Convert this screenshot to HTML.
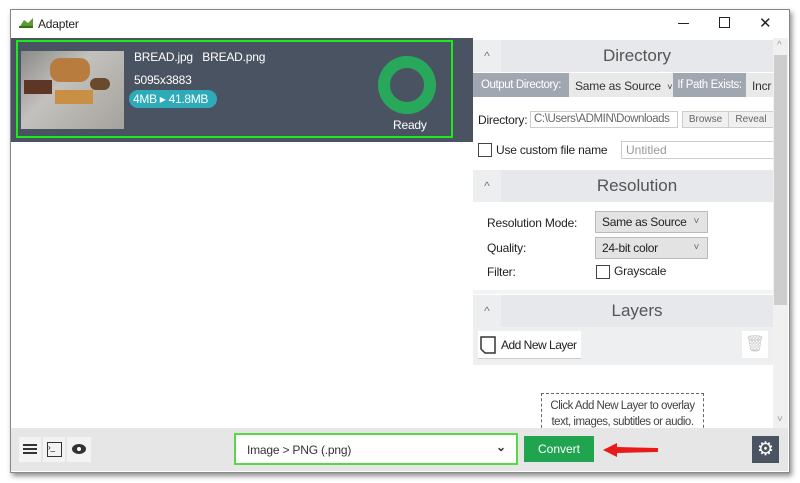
<!DOCTYPE html><html><head><style>
body{margin:0;width:800px;height:483px;background:#fff;font-family:"Liberation Sans",sans-serif;position:relative;overflow:hidden}
.a{position:absolute;white-space:nowrap}
.win{left:10px;top:9px;width:778px;height:462px;border:1px solid #888;box-shadow:2px 3px 5px rgba(0,0,0,.45);background:#fff}
.t{font-size:12px;color:#222;letter-spacing:-0.2px}
.hd{background:#e6e8eb;height:32px}
.hd .c{position:absolute;left:0;top:0;width:28px;height:32px;background:#eceef0;color:#777;text-align:center;font-size:12px;line-height:32px}
.hd .n{position:absolute;left:28px;right:0;text-align:center;font-size:17px;color:#555;line-height:32px}
.sel{background:#e3e3e3;border:1px solid #bbb;font-size:12px;color:#222;padding-left:6px;line-height:20px;height:20px;letter-spacing:-0.3px}
.sel:after{content:"˅";position:absolute;right:8px;top:0;font-size:10px;color:#666}
.cb{width:12px;height:12px;border:1px solid #444;background:#fff}
</style></head><body>
<div class="a win"></div>
<svg class="a" style="left:18px;top:16px" width="16" height="14"><path d="M1 12 L6 4 L10 7 L15 2 L15 12Z" fill="#5a9b2e"/><path d="M1 12 L15 12 L15 10 L1 10Z" fill="#3b6e1b"/></svg>
<div class="a t" style="left:38px;top:17px">Adapter</div>
<div class="a" style="left:678px;top:23px;width:11px;height:1px;background:#222"></div>
<div class="a" style="left:719px;top:17px;width:9px;height:9px;border:1px solid #222"></div>
<div class="a" style="left:759px;top:14px;font-size:15px;color:#222">✕</div>
<div class="a" style="left:11px;top:38px;width:462px;height:104px;background:#4a5361"></div>
<div class="a" style="left:16px;top:40px;width:433px;height:94px;border:2px solid #1bea1b"></div>
<div class="a" style="left:21px;top:51px;width:103px;height:78px;background:linear-gradient(135deg,#8a8a88,#c3c1bd 40%,#a5a29c)"></div>
<div class="a" style="left:50px;top:58px;width:40px;height:24px;border-radius:10px;background:#b77c3e"></div>
<div class="a" style="left:55px;top:90px;width:38px;height:14px;background:#c98f45"></div>
<div class="a" style="left:24px;top:80px;width:28px;height:14px;background:#5d3626"></div>
<div class="a" style="left:90px;top:78px;width:20px;height:12px;border-radius:6px;background:#6a4a2a"></div>
<div class="a t" style="left:134px;top:50px;color:#fff">BREAD.jpg &nbsp;&nbsp;BREAD.png</div>
<div class="a t" style="left:134px;top:73px;color:#fff">5095x3883</div>
<div class="a" style="left:129px;top:90px;width:88px;height:18px;border-radius:9px;background:#2eabb8;color:#fff;font-size:12px;line-height:18px;padding-left:4px;box-sizing:border-box;letter-spacing:-0.3px">4MB ▸ 41.8MB</div>
<div class="a" style="left:378px;top:56px;width:58px;height:58px;border-radius:50%;border:12px solid #27a85a;box-sizing:border-box"></div>
<div class="a t" style="left:393px;top:118px;color:#fff">Ready</div>
<div class="a hd" style="left:473px;top:40px;width:300px"><div class="c">^</div><div class="n">Directory</div></div>
<div class="a" style="left:473px;top:73px;width:300px;height:24px;background:#e9e9e9;overflow:hidden">
<div class="a" style="left:0;top:0;width:96px;height:24px;background:#a1a7b0;color:#fff;font-size:11.5px;line-height:24px;text-align:center;letter-spacing:-0.4px">Output Directory:</div>
<div class="a t" style="left:102px;top:6px;color:#333">Same as Source &nbsp;<span style="font-size:9px">˅</span></div>
<div class="a" style="left:200px;top:0;width:73px;height:24px;background:#a1a7b0;color:#fff;font-size:11.5px;line-height:24px;text-align:center;letter-spacing:-0.4px">If Path Exists:</div>
<div class="a t" style="left:279px;top:6px;color:#333">Incr</div></div>
<div class="a t" style="left:478px;top:113px">Directory:</div>
<div class="a" style="left:530px;top:111px;width:143px;height:15px;border:1px solid #ccc;font-size:11.5px;color:#666;line-height:15px;padding-left:3px;overflow:hidden;letter-spacing:-0.4px">C:\Users\ADMIN\Downloads</div>
<div class="a" style="left:682px;top:111px;width:45px;height:15px;border:1px solid #ccc;background:#f0f0f0;font-size:10px;color:#666;text-align:center;line-height:15px">Browse</div>
<div class="a" style="left:728px;top:111px;width:44px;height:15px;border:1px solid #ccc;background:#f0f0f0;font-size:10px;color:#666;text-align:center;line-height:15px">Reveal</div>
<div class="a cb" style="left:478px;top:143px"></div>
<div class="a t" style="left:496px;top:143px">Use custom file name</div>
<div class="a" style="left:621px;top:141px;width:148px;height:16px;border:1px solid #ccc;font-size:12px;color:#999;line-height:16px;padding-left:4px">Untitled</div>
<div class="a hd" style="left:473px;top:170px;width:300px"><div class="c">^</div><div class="n">Resolution</div></div>
<div class="a t" style="left:487px;top:216px">Resolution Mode:</div>
<div class="a sel" style="left:595px;top:211px;width:105px">Same as Source</div>
<div class="a t" style="left:487px;top:241px">Quality:</div>
<div class="a sel" style="left:595px;top:237px;width:105px">24-bit color</div>
<div class="a t" style="left:487px;top:265px">Filter:</div>
<div class="a cb" style="left:596px;top:265px"></div>
<div class="a t" style="left:614px;top:264px">Grayscale</div>
<div class="a" style="left:473px;top:290px;width:300px;height:4px;background:#f3f3f3"></div>
<div class="a hd" style="left:473px;top:295px;width:300px"><div class="c">^</div><div class="n">Layers</div></div>
<div class="a" style="left:473px;top:327px;width:300px;height:38px;background:#eeeff1"></div>
<div class="a" style="left:478px;top:331px;width:103px;height:27px;background:#fff;border-bottom:1px solid #ccc"></div>
<svg class="a" style="left:480px;top:336px" width="16" height="19"><path d="M1 1 H15 V17 H5 L1 13Z" fill="none" stroke="#333" stroke-width="1.5"/></svg>
<div class="a t" style="left:501px;top:338px;letter-spacing:-0.5px">Add New Layer</div>
<div class="a" style="left:742px;top:331px;width:26px;height:27px;background:#fff;color:#ccc;text-align:center;font-size:16px;line-height:27px">🗑</div>
<div class="a" style="left:541px;top:393px;width:163px;height:40px;border:1px dashed #666;font-size:11.5px;color:#444;text-align:center;line-height:16px;padding-top:4px;box-sizing:border-box;letter-spacing:-0.5px;white-space:normal">Click Add New Layer to overlay text, images, subtitles or audio.</div>
<div class="a" style="left:773px;top:38px;width:15px;height:390px;background:#f0f0f0"></div>
<div class="a" style="left:774px;top:55px;width:13px;height:250px;background:#cdcdcd"></div>
<div class="a" style="left:777px;top:40px;font-size:10px;color:#999">^</div>
<div class="a" style="left:777px;top:414px;font-size:10px;color:#999">˅</div>
<div class="a" style="left:11px;top:428px;width:777px;height:43px;background:#e6e6e6"></div>
<div class="a" style="left:19px;top:437px;width:22px;height:25px;background:#f3f3f3"></div>
<div class="a" style="left:23px;top:444px;width:14px;height:2px;background:#333;box-shadow:0 4px #333,0 8px #333"></div>
<div class="a" style="left:43px;top:437px;width:22px;height:25px;background:#f3f3f3"></div>
<div class="a" style="left:47px;top:442px;width:13px;height:13px;border:1px solid #333;font-size:8px;line-height:10px">›_</div>
<div class="a" style="left:67px;top:437px;width:24px;height:25px;background:#f3f3f3"></div>
<div class="a" style="left:72px;top:444px;width:14px;height:10px;border-radius:50%;background:#333"></div>
<div class="a" style="left:77px;top:447px;width:4px;height:4px;border-radius:50%;background:#fff"></div>
<div class="a" style="left:234px;top:433px;width:280px;height:28px;border:2px solid #56d945;background:#fff"></div>
<div class="a t" style="left:247px;top:443px;color:#333">Image &gt; PNG (.png)</div>
<div class="a" style="left:496px;top:440px;font-size:12px;color:#333;font-weight:bold">⌄</div>
<div class="a" style="left:524px;top:436px;width:70px;height:26px;background:#20a44f;color:#fff;font-size:12px;text-align:center;line-height:26px">Convert</div>
<svg class="a" style="left:603px;top:442px" width="56" height="16"><path d="M0 8 L14 1 L14 5 L55 6 L55 10 L14 11 L14 15Z" fill="#e81a1a"/></svg>
<div class="a" style="left:752px;top:436px;width:27px;height:27px;background:#4a5361;color:#fff;text-align:center;font-size:19px;line-height:27px">⚙</div>
</body></html>
